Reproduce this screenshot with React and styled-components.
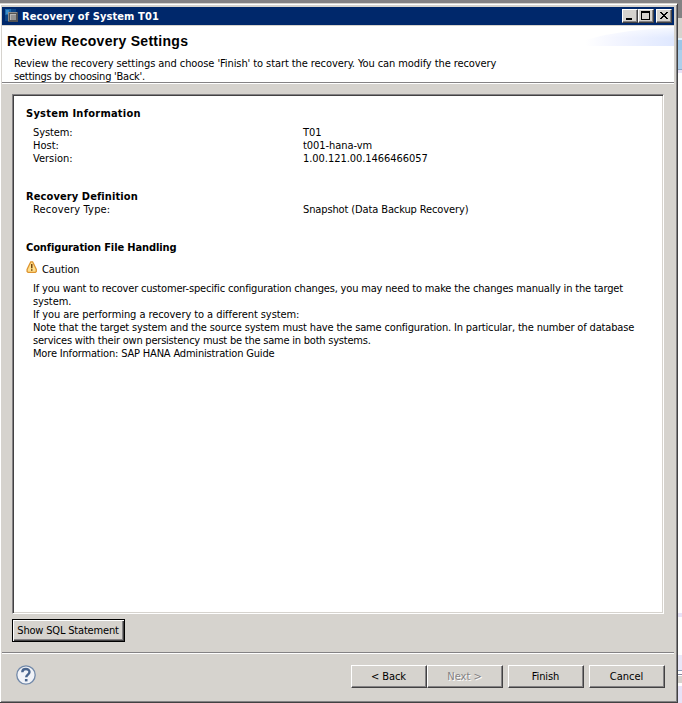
import React from "react";
import styled, { createGlobalStyle } from "styled-components";

const face = "#d6d3ce";
const shadow = "#848284";
const dark = "#424142";

const Global = createGlobalStyle`
  * { box-sizing: border-box; }
  html, body { margin: 0; padding: 0; overflow: hidden; background: #fff; }
  body {
    font-family: "DejaVu Sans Condensed", Tahoma, sans-serif;
    font-size: 11px;
    line-height: 13px;
    color: #000;
    white-space: nowrap;
    cursor: default;
  }
`;

const Desktop = styled.div`
  display: grid;
  grid-template-rows: 3px 700px;
  grid-template-columns: 678px 4px;
  width: 682px;
  height: 703px;
  background: ${shadow};
`;
const Dialog = styled.div`
  grid-row: 2;
  grid-column: 1;
  display: flex;
  flex-direction: column;
  background: ${face};
  border-top: 1px solid ${face};
  border-right: 1px solid ${dark};
  border-bottom: 1px solid ${dark};
  box-shadow: inset 0 1px #fff, inset 1px 0 #fff, inset -1px -1px ${shadow};
  padding: 3px 3px 0 2px;
`;
const Backdrop = styled.div`
  grid-row: 1 / 3;
  grid-column: 2;
  display: flex;
  flex-direction: column;
`;
const Band = styled.div`
  height: ${(p) => p.$h}px;
  flex: none;
  background: ${(p) => p.$bg};
`;

const TitleBar = styled.header`
  height: 18px;
  flex: none;
  display: flex;
  align-items: center;
  padding: 0 2px 0 3px;
  background: #00286b;
  color: #fff;
  font-weight: bold;
`;
const TitleText = styled.span`
  flex: 1;
  padding-left: 3px;
  letter-spacing: 0.1px;
`;
const CaptionButton = styled.button`
  width: 16px;
  height: 14px;
  padding: 0;
  margin: 0 0 0 ${(p) => p.$gap || 0}px;
  border: 1px solid;
  border-color: #fff ${dark} ${dark} #fff;
  box-shadow: inset -1px -1px ${shadow};
  background: ${face};
  display: flex;
`;

const Banner = styled.section`
  height: 59px;
  flex: none;
  display: flex;
  justify-content: space-between;
  border-top: 1px solid ${face};
  border-bottom: 1px solid #fff;
  box-shadow: inset 0 -1px ${shadow};
  background: #fff;
`;
const BannerCopy = styled.div`
  padding: 7px 0 0 5px;
`;
const Heading = styled.h1`
  margin: 0;
  font: bold 14px/16px "Liberation Sans", Arial, sans-serif;
  letter-spacing: 0.29px;
`;
const Description = styled.div`
  padding: 8px 0 0 7px;
`;
const Line = styled.div`
  height: 13px;
  letter-spacing: ${(p) => p.$track || 0}px;
`;

const Content = styled.main`
  height: 568px;
  flex: none;
  padding: 10px 11px 0 10px;
`;
const Report = styled.div`
  width: 652px;
  height: 520px;
  padding: 12px;
  background: #fff;
  border: 1px solid;
  border-color: ${shadow} #fff #fff ${shadow};
  box-shadow: inset 1px 1px ${dark}, inset -1px -1px ${face};
`;
const Section = styled.section`
  margin-left: 1px;
  height: ${(p) => p.$h}px;
`;
const SectionTitle = styled.h2`
  margin: 0 0 ${(p) => p.$after}px;
  height: 13px;
  font-size: 11px;
  line-height: 13px;
  letter-spacing: ${(p) => p.$track}px;
`;
const Property = styled.div`
  display: grid;
  grid-template-columns: 270px 1fr;
  padding-left: 7px;
`;
const Caution = styled.div`
  display: flex;
  height: 13px;
  gap: 5px;
  svg {
    margin-top: -2px;
  }
`;
const Notes = styled.div`
  padding: 6px 0 0 7px;
`;

const Push = styled.button`
  width: ${(p) => p.$w || 76}px;
  height: 23px;
  padding: 0 1px 1px 0;
  flex: none;
  margin-left: ${(p) => p.$gap || 0}px;
  font: inherit;
  letter-spacing: ${(p) => p.$track || 0}px;
  color: #000;
  background: ${face};
  border: 1px solid;
  border-color: ${(p) => (p.$default ? "#000" : `#fff ${dark} ${dark} #fff`)};
  box-shadow: ${(p) =>
    p.$default
      ? `inset 1px 1px #fff, inset -1px -1px ${dark}, inset -2px -2px ${shadow}`
      : `inset -1px -1px ${shadow}`};
  &:disabled {
    color: ${shadow};
    text-shadow: 1px 1px #fff;
  }
`;
const SqlRow = styled.div`
  padding-top: 5px;
`;
const Footer = styled.footer`
  display: flex;
  align-items: flex-start;
  padding: 12px 9px 0 14px;
  border-top: 1px solid ${shadow};
  box-shadow: inset 0 1px #fff;
`;
const Spacer = styled.div`
  flex: 1;
`;

const SystemIcon = () => (
  <svg width="14" height="14" viewBox="0 0 14 14" shapeRendering="crispEdges">
    <path d="M0 0h11v3H3v9H0z" fill="#0b4486" />
    <path d="M0 0h6v3H3v3H0z" fill="#1c69aa" />
    <path d="M1 1h3v2H3v2H1z" fill="#3b8cc9" />
    <path d="M3 3h10v10H3z" fill="#545454" />
    <path d="M3 3h9v1H4v8H3z" fill="#8d8d8d" />
    <path d="M5 5h6v6H5z" fill="#929292" />
    <path d="M5 5h6v1H6v5H5z" fill="#b5b5b5" />
  </svg>
);
const Glyph = ({ d }) => (
  <svg width="14" height="12" viewBox="0 0 14 12" shapeRendering="crispEdges">
    <path d={d} fill="#000" />
  </svg>
);
const BannerArt = () => (
  <svg width="89" height="20" viewBox="0 0 89 20">
    <defs>
      <linearGradient id="glow">
        <stop offset="0" stopColor="#fff" />
        <stop offset=".35" stopColor="#f3f5ff" />
        <stop offset="1" stopColor="#dfe8ff" />
      </linearGradient>
      <linearGradient id="fade" x2="0" y2="1">
        <stop offset="0" stopColor="#fff" stopOpacity=".8" />
        <stop offset=".6" stopColor="#fff" stopOpacity="0" />
      </linearGradient>
    </defs>
    <path d="M0 20V14L20 9L45 5L89 1V20z" fill="url(#glow)" />
    <path d="M0 0H89V20H0z" fill="url(#fade)" />
  </svg>
);
const WarningIcon = () => (
  <svg width="11" height="12" viewBox="0 0 11 12">
    <path
      d="M4.8.8h1.8L7.7 3l1.1 2.3 1.5 3.2v2l-1 .9H2.1l-1-.9v-2l1.5-3.2L3.7 3z"
      fill="#ffdf8c"
      stroke="#dd9430"
      strokeWidth="1.3"
    />
    <path d="M5 3h1.5v4.2H5zM5 8.3h1.5v1.5H5z" fill="#744711" />
  </svg>
);
const HelpIcon = () => (
  <svg width="20" height="20" viewBox="0 0 20 20">
    <circle cx="10" cy="10" r="9.2" fill="#f1f3f8" stroke="#7188a8" strokeWidth="1.3" />
    <path
      d="M6.3 7.2C6.3 3 13.5 3.1 13.5 7c0 2.6-3.3 2.6-3.3 5.3"
      fill="none"
      stroke="#49648d"
      strokeWidth="2.4"
    />
    <path d="M8.9 14h2.6v2.4H8.9z" fill="#49648d" />
  </svg>
);

const system = [
  ["System:", -0.1, "T01", 0],
  ["Host:", 0, "t001-hana-vm", -0.06],
  ["Version:", 0, "1.00.121.00.1466466057", -0.05],
];
const notes = [
  ["If you want to recover customer-specific configuration changes, you may need to make the changes manually in the target", -0.172],
  ["system.", -0.1],
  ["If you are performing a recovery to a different system:", -0.07],
  ["Note that the target system and the source system must have the same configuration. In particular, the number of database", -0.158],
  ["services with their own persistency must be the same in both systems.", -0.22],
  ["More Information: SAP HANA Administration Guide", -0.18],
];
const bands = [
  [18, shadow],
  [20, face],
  [2, "#dff0fb"],
  [10, "#9cc6e8"],
  [19, "#adcfeb"],
  [1, "#8caac8"],
  [3, "#e7e3f7"],
  [540, "#fff"],
  [4, "#e7e3f7"],
  [38, "#fff"],
  [15, "#e9e8f8"],
  [1, "#8c9cb8"],
  [3, "#fff"],
  [1, "#8486a0"],
  [1, "#fff"],
  [7, face],
  [3, "#fff"],
  [17, "#e7e3f7"],
];

export default function App() {
  return (
    <>
      <Global />
      <Desktop>
        <Dialog>
          <TitleBar>
            <SystemIcon />
            <TitleText>Recovery of System T01</TitleText>
            <CaptionButton aria-label="Minimize">
              <Glyph d="M3 8h6v2H3z" />
            </CaptionButton>
            <CaptionButton aria-label="Maximize">
              <Glyph d="M2 1h9v9H2zM3 3v6h7V3z" />
            </CaptionButton>
            <CaptionButton aria-label="Close" $gap={2}>
              <Glyph d="M3 2h2v1h1v1h2V3h1V2h2v1h-1v1H9v1H8v1h1v1h1v1h1v1H9V8H8V7H6v1H5v1H3V8h1V7h1V6h1V5H5V4H4V3H3z" />
            </CaptionButton>
          </TitleBar>
          <Banner>
            <BannerCopy>
              <Heading>Review Recovery Settings</Heading>
              <Description>
                <Line $track={-0.085}>
                  Review the recovery settings and choose 'Finish' to start the recovery. You can modify the recovery
                </Line>
                <Line $track={-0.25}>settings by choosing 'Back'.</Line>
              </Description>
            </BannerCopy>
            <BannerArt />
          </Banner>
          <Content>
            <Report>
              <Section $h={83}>
                <SectionTitle $after={6} $track={0.25}>System Information</SectionTitle>
                {system.map(([name, a, value, b]) => (
                  <Property key={name}>
                    <Line $track={a}>{name}</Line>
                    <Line $track={b}>{value}</Line>
                  </Property>
                ))}
              </Section>
              <Section $h={51}>
                <SectionTitle $after={0} $track={0.1}>Recovery Definition</SectionTitle>
                <Property>
                  <Line $track={0.18}>Recovery Type:</Line>
                  <Line $track={-0.12}>Snapshot (Data Backup Recovery)</Line>
                </Property>
              </Section>
              <Section $h={200}>
                <SectionTitle $after={9} $track={-0.12}>Configuration File Handling</SectionTitle>
                <Caution>
                  <WarningIcon />
                  <Line $track={-0.1}>Caution</Line>
                </Caution>
                <Notes>
                  {notes.map(([text, track]) => (
                    <Line key={text} $track={track}>{text}</Line>
                  ))}
                </Notes>
              </Section>
            </Report>
            <SqlRow>
              <Push $w={113} $default $track={-0.18}>Show SQL Statement</Push>
            </SqlRow>
          </Content>
          <Footer>
            <HelpIcon />
            <Spacer />
            <Push $track={-0.1}>&lt; Back</Push>
            <Push disabled>Next &gt;</Push>
            <Push $gap={5} $track={-0.1}>Finish</Push>
            <Push $gap={5}>Cancel</Push>
          </Footer>
        </Dialog>
        <Backdrop>
          {bands.map(([h, bg], i) => (
            <Band key={i} $h={h} $bg={bg} />
          ))}
        </Backdrop>
      </Desktop>
    </>
  );
}
